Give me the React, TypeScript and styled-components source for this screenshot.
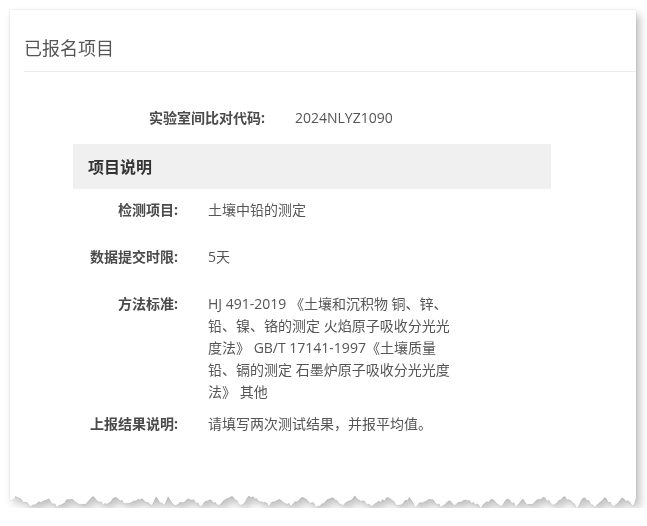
import React from "react";
import styled, { createGlobalStyle } from "styled-components";

const GlobalStyle = createGlobalStyle`
  html, body {
    margin: 0;
    padding: 0;
    background: #ffffff;
  }
  body {
    font-family: "Open Sans", "Noto Sans CJK SC", sans-serif;
    color: #555;
  }
`;

const CARD_W = 626;
const CARD_H = 498;

// Builds a ragged "torn paper" outline for the bottom edge of the sheet.
function tornOutline(w: number, h: number): string {
  let seed = 11;
  const rand = () => {
    seed = (seed * 9301 + 49297) % 233280;
    return seed / 233280;
  };
  const pts: string[] = ["0px 0px", `${w}px 0px`];
  let x = w;
  const low = h - 1;
  const high = h - 12;
  pts.push(`${w}px ${high + 2}px`);
  while (x > 0) {
    const tooth = 12 + Math.round(rand() * 16);
    const peakAt = 0.3 + rand() * 0.4;
    const peakY = high + Math.round(rand() * 3);
    const valleyY = low - Math.round(rand() * 3);
    const steps = Math.max(3, Math.round(tooth / 2));
    for (let i = 1; i <= steps; i++) {
      const t = i / steps;
      const px = x - tooth * t;
      let y: number;
      if (t < peakAt) {
        y = valleyY + (peakY - valleyY) * (t / peakAt);
      } else {
        y = peakY + (valleyY - peakY) * ((t - peakAt) / (1 - peakAt));
      }
      y += Math.round((rand() - 0.5) * 3);
      pts.push(`${Math.max(0, px).toFixed(1)}px ${Math.min(h, y).toFixed(1)}px`);
    }
    x -= tooth;
  }
  pts.push(`0px ${high + 4}px`);
  return `polygon(${pts.join(", ")})`;
}

const Page = styled.div`
  padding: 10px 0 0 10px;
`;

const Shadow = styled.div`
  width: ${CARD_W}px;
  filter: drop-shadow(0 0 1px rgba(0, 0, 0, 0.14)) drop-shadow(4px 5px 4px rgba(0, 0, 0, 0.24));
`;

const Sheet = styled.div<{ $clip: string }>`
  width: ${CARD_W}px;
  height: ${CARD_H}px;
  background: #ffffff;
  clip-path: ${(p) => p.$clip};
  display: flex;
  flex-direction: column;
`;

const Header = styled.div`
  margin-left: 14px;
  padding: 24px 0 9px 0;
  border-bottom: 1px solid #ececec;
  font-size: 18px;
  line-height: 28px;
  color: #555;
  font-weight: 400;
`;

const Body = styled.div`
  width: 478px;
  margin-left: 63px;
  padding-top: 35px;
  display: flex;
  flex-direction: column;
  font-size: 14px;
  line-height: 22px;
`;

const CodeRow = styled.div`
  display: grid;
  grid-template-columns: 192px auto;
  column-gap: 30px;
  min-height: 37px;
`;

const Label = styled.div`
  text-align: right;
  font-weight: 700;
  color: #4a4a4a;
`;

const Value = styled.div`
  color: #555;
`;

const Band = styled.div`
  height: 45px;
  background: #f0f0f0;
  padding-left: 15px;
  display: flex;
  align-items: center;
  font-size: 16px;
  font-weight: 700;
  color: #333;
  margin-bottom: 10px;
`;

const Fields = styled.div`
  display: flex;
  flex-direction: column;
  gap: 10px;
`;

const Field = styled.div`
  display: grid;
  grid-template-columns: 105px 243px;
  column-gap: 30px;
  min-height: 37px;
`;

const fields: { label: string; value: string }[] = [
  { label: "检测项目:", value: "土壤中铅的测定" },
  { label: "数据提交时限:", value: "5天" },
  {
    label: "方法标准:",
    value:
      "HJ 491-2019 《土壤和沉积物 铜、锌、铅、镍、铬的测定 火焰原子吸收分光光度法》 GB/T 17141-1997《土壤质量 铅、镉的测定 石墨炉原子吸收分光光度法》 其他",
  },
  { label: "上报结果说明:", value: "请填写两次测试结果，并报平均值。" },
];

const clip = tornOutline(CARD_W, CARD_H);

export default function App() {
  return (
    <Page>
      <GlobalStyle />
      <Shadow>
        <Sheet $clip={clip}>
          <Header>已报名项目</Header>
          <Body>
            <CodeRow>
              <Label>实验室间比对代码:</Label>
              <Value>2024NLYZ1090</Value>
            </CodeRow>
            <Band>项目说明</Band>
            <Fields>
              {fields.map((f) => (
                <Field key={f.label}>
                  <Label>{f.label}</Label>
                  <Value>{f.value}</Value>
                </Field>
              ))}
            </Fields>
          </Body>
        </Sheet>
      </Shadow>
    </Page>
  );
}
